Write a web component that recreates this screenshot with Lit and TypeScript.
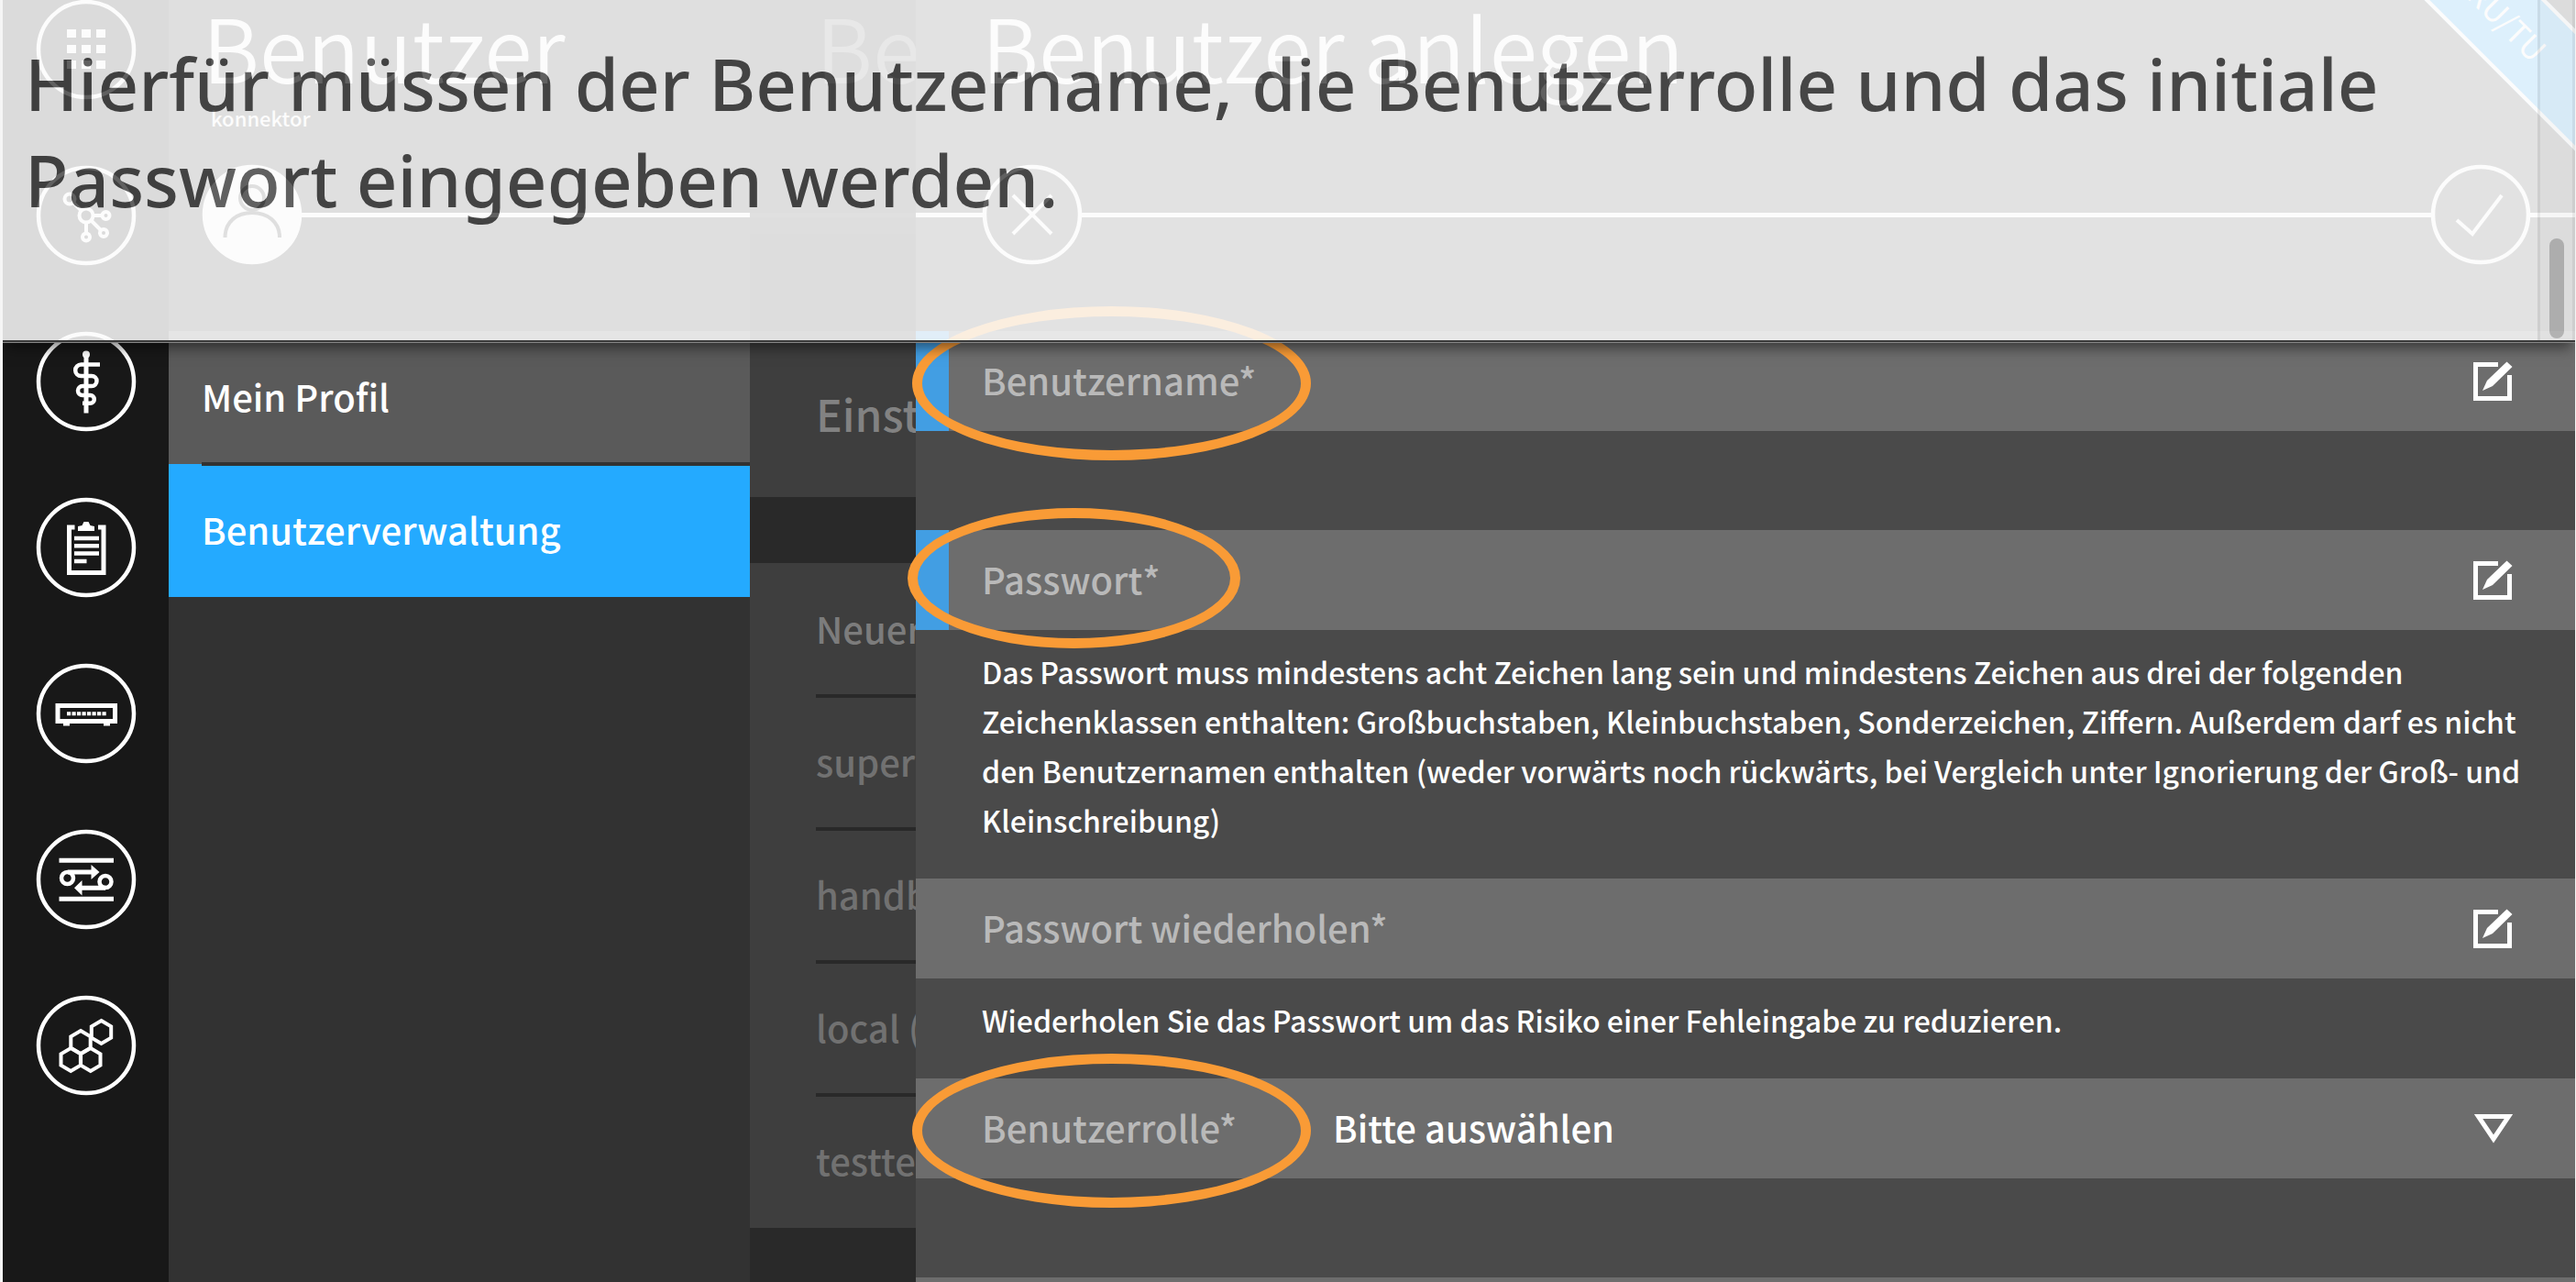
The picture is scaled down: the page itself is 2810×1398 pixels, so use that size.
import { LitElement, html, svg, css, nothing } from "lit";
import { customElement } from "lit/decorators.js";
import { classMap } from "lit/directives/class-map.js";

const hexagon = (cx: number, cy: number, r: number) =>
  [0, 1, 2, 3, 4, 5]
    .map((i) => {
      const a = (Math.PI / 3) * i - Math.PI / 2;
      return `${(cx + r * Math.cos(a)).toFixed(1)},${(cy + r * Math.sin(a)).toFixed(1)}`;
    })
    .join(" ");

const glyphs = {
  apps: svg`<g fill="#fff">${[38, 54, 70].map((x) =>
    [37, 54, 71].map((y) => svg`<rect x=${x - 5} y=${y - 5} width="10" height="9" />`)
  )}</g>`,
  network: svg`<g fill="none" stroke="#fff" stroke-width="4">
    <circle cx="54" cy="54" r="7.5" /><circle cx="75.5" cy="54" r="4" /><circle cx="73" cy="73" r="4" />
    <circle cx="54" cy="77.5" r="4" /><circle cx="36" cy="36" r="5.5" />
    <path d="M62 54H71M59.500 59.500L70 70M54 62V73M40 40L48.500 48.500" /></g>`,
  medical: svg`<g fill="none" stroke="#fff" stroke-width="4.5">
    <path d="M54 22V88.500" stroke-width="5" />
    <path d="M69 35.500H48.500a6.300 6.300 0 0 0 0 12.600H60a5.500 5.500 0 0 1 0 11H50a5 5 0 0 0 0 10H58.500a4.300 4.300 0 0 1 0 8.600H50" />
    <circle cx="54" cy="24.500" r="4" fill="#fff" stroke="none" /></g>`,
  report: svg`<g fill="none" stroke="#fff" stroke-width="5">
    <path d="M41.500 32H35.500V81.500H73V32H67" />
    <path d="M41 44H68M41 52.200H68M41 60.500H68M41 69H54.500" stroke-width="4.500" />
    <path d="M45 36V31L49.500 30L51.500 26H56.500L58.500 30L63 31V36Z" fill="#fff" stroke="none" /></g>`,
  device: svg`<g fill="none" stroke="#fff" stroke-width="5">
    <rect x="23" y="45.500" width="62.500" height="17" />
    <path d="M33 54.200H76" stroke-width="4" stroke-dasharray="4.200 1.300" />
    <path d="M29 66H36M73 66H80" stroke-width="3" /></g>`,
  transfer: svg`<g fill="none" stroke="#fff" stroke-width="5">
    <path d="M24.500 33.200H84M24.500 75.200H84M34 46H60M75 63.200H49" />
    <circle cx="33.500" cy="52.500" r="6.500" stroke-width="4.500" /><circle cx="75" cy="56.500" r="6.500" stroke-width="4.500" />
    <path d="M59.500 38L68.500 46L59.500 54ZM49.500 55L41 63.200L49.500 71.500Z" fill="#fff" stroke="none" /></g>`,
  modules: svg`<g fill="none" stroke="#fff" stroke-width="4">${[
    [70.5, 39.5],
    [48, 50.5],
    [37.2, 69.5],
    [58.8, 69.5],
  ].map(([x, y]) => svg`<polygon points=${hexagon(x, y, 12.4)} />`)}</g>`,
  close: svg`<path d="M33 33L75 75M75 33L33 75" fill="none" stroke="#fff" stroke-width="4" />`,
  check: svg`<path d="M28 60L45 75L77 33" fill="none" stroke="#fff" stroke-width="4" />`,
  user: svg`<g fill="none" stroke="#323232" stroke-width="4">
    <circle cx="54" cy="36" r="13" /><path d="M24.500 79C24.500 62 37 52 54 52S84 62 84 79" /></g>`,
};

type Glyph = keyof typeof glyphs;

const round = (name: Glyph, filled = false) => html`<svg class="round" viewBox="0 0 108 108" aria-hidden="true">
  <circle cx="54" cy="54" r="52" fill=${filled ? "#fff" : "none"} stroke="#fff" stroke-width="4.5" />
  ${glyphs[name]}
</svg>`;

const pencil = html`<svg class="pencil" viewBox="0 0 44 44" aria-hidden="true">
  <path d="M28 3.500H3.500V40.500H40.500V15" fill="none" stroke="#fff" stroke-width="5" />
  <path d="M11 32L16 21L37.500 0.500L43.500 6L22 27Z" fill="#fff" />
</svg>`;

const navItems: [Glyph, string][] = [
  ["apps", "Übersicht"],
  ["network", "Netzwerk"],
  ["medical", "Fachdienste"],
  ["report", "Protokolle"],
  ["device", "Kartenterminals"],
  ["transfer", "Verbindungen"],
  ["modules", "Module"],
];

const accounts = ["Neuer", "super", "handb", "local (", "testte"];

interface Field {
  id: string;
  label: string;
  type: string;
  required?: boolean;
  ring?: string;
  hint?: string;
}

const fields: Field[] = [
  { id: "name", label: "Benutzername*", type: "text", required: true, ring: "wide" },
  {
    id: "password",
    label: "Passwort*",
    type: "password",
    required: true,
    ring: "narrow",
    hint: "Das Passwort muss mindestens acht Zeichen lang sein und mindestens Zeichen aus drei der folgenden Zeichenklassen enthalten: Großbuchstaben, Kleinbuchstaben, Sonderzeichen, Ziffern. Außerdem darf es nicht den Benutzernamen enthalten (weder vorwärts noch rückwärts, bei Vergleich unter Ignorierung der Groß- und Kleinschreibung)",
  },
  {
    id: "repeat",
    label: "Passwort wiederholen*",
    type: "password",
    hint: "Wiederholen Sie das Passwort um das Risiko einer Fehleingabe zu reduzieren.",
  },
];

@customElement("app-root")
export class AppRoot extends LitElement {
  static styles = css`
    :host {
      display: block;
      background: #f5f5f5;
      color: #fff;
      font-family: "Noto Sans CJK SC", "Noto Sans", sans-serif;
      font-weight: 500;
      font-size: 40px;
    }
    * {
      box-sizing: border-box;
    }
    h1, h2, p, ul {
      margin: 0;
      padding: 0;
      list-style: none;
    }
    button, input, select {
      margin: 0;
      padding: 0;
      border: 0;
      background: none;
      color: inherit;
      font: inherit;
      appearance: none;
    }
    a {
      color: inherit;
      text-decoration: none;
    }
    svg {
      display: block;
      flex: none;
    }
    .frame {
      position: relative;
      display: grid;
      grid-template-columns: 181px 634px 181px minmax(0, 1fr);
      height: 100vh;
      margin: 0 1px 0 3px;
      overflow: hidden;
    }
    .rail {
      display: flex;
      flex-direction: column;
      align-items: center;
      gap: 73px;
      background: #181818;
    }
    .round {
      width: 108px;
      height: 108px;
      overflow: visible;
    }
    .column {
      min-width: 0;
      overflow: hidden;
      white-space: nowrap;
    }
    .menu {
      background: #323232;
    }
    .list {
      background: #292929;
      color: #717171;
    }
    .panel {
      background: #4a4a4a;
      white-space: normal;
      overflow: visible;
    }
    .head {
      padding: 2px 0 73px;
    }
    .title {
      padding-left: 37px;
      font-size: 95px;
      line-height: 96px;
      font-weight: 350;
    }
    .list .title,
    .panel .title {
      padding-left: 72px;
    }
    .sub {
      height: 60px;
      padding-left: 46px;
      font-size: 22px;
      line-height: 60px;
    }
    .bar {
      display: flex;
      align-items: center;
      height: 108px;
      margin-top: 22px;
    }
    .menu .bar {
      padding-left: 37px;
    }
    .line {
      flex: 1;
      height: 5px;
      background: #fff;
    }
    .line.start {
      flex: 0 0 73px;
    }
    .line.end {
      flex: 0 0 49px;
    }
    .list .line {
      background: #3a3a3a;
    }
    .list .title {
      color: #6f6f6f;
    }
    .entry {
      position: relative;
      display: flex;
      align-items: center;
      height: 145px;
      padding: 0 0 4px 36px;
      background: #5a5a5a;
    }
    .entry.active {
      background: #24aaff;
    }
    .entry + .entry::before {
      content: "";
      position: absolute;
      inset: -2px 0 auto 36px;
      height: 4px;
      background: #323232;
    }
    .section {
      display: flex;
      align-items: center;
      height: 181px;
      margin-bottom: 72px;
      padding: 0 0 4px 72px;
      background: #3e3e3e;
      color: #828282;
      font-size: 48px;
    }
    .list .entry {
      padding-left: 72px;
      background: #3e3e3e;
    }
    .list .entry:first-child {
      color: #7c7c7c;
    }
    .list .entry + .entry::before {
      left: 72px;
      background: #292929;
    }
    .field {
      position: relative;
      display: flex;
      align-items: center;
      height: 109px;
      padding: 0 68px 0 72px;
      background: #6d6d6d;
    }
    .field.required {
      box-shadow: inset 36px 0 #429ee3;
    }
    .field label {
      min-width: 383px;
      padding-bottom: 4px;
      color: #b9b9b9;
    }
    .field input,
    .field select {
      flex: 1;
      min-width: 0;
      padding-bottom: 4px;
      outline: 0;
    }
    .gap {
      height: 108px;
    }
    .hint {
      padding: 18px 54px 37px 72px;
      font-size: 32px;
      line-height: 54px;
    }
    .pencil {
      width: 44px;
      height: 44px;
    }
    .arrow {
      width: 42px;
      height: 32px;
    }
    .ring {
      position: absolute;
      z-index: 1;
      border: 11px solid #f99b36;
      border-radius: 50%;
      pointer-events: none;
    }
    .ring.wide {
      left: -4px;
      top: -27px;
      width: 435px;
      height: 168px;
    }
    .ring.narrow {
      left: -9px;
      top: -24px;
      width: 363px;
      height: 153px;
    }
    .ribbon {
      position: absolute;
      top: 2px;
      right: -151px;
      width: 400px;
      height: 94px;
      padding-right: 184px;
      border: solid #fff;
      border-width: 4px 0;
      background: #24aaff;
      font-size: 34px;
      line-height: 84px;
      font-weight: 400;
      text-align: right;
      transform: rotate(45deg);
    }
    .caption {
      position: absolute;
      z-index: 2;
      inset: 0 0 auto 0;
      border-bottom: 2px solid #3a3a3a;
      box-shadow: 0 1px #868686, 0 10px 14px -4px rgba(0, 0, 0, 0.5);
    }
    .sheet {
      display: flex;
      background: #fcfcfc;
      color: #464646;
      opacity: 0.86;
    }
    .message {
      flex: 1;
      padding: 39px 100px 122px 24px;
      font-family: "Noto Sans", sans-serif;
      font-size: 78px;
      line-height: 105px;
      font-weight: 500;
    }
    .track {
      display: flex;
      flex-direction: column;
      justify-content: flex-end;
      align-items: center;
      width: 41px;
      padding-bottom: 2px;
      border: solid #e4e4e4;
      border-width: 0 3px;
      background: #f5f5f5;
    }
    .thumb {
      width: 16px;
      height: 109px;
      border-radius: 8px;
      background: #bebebe;
    }
  `;

  private renderField(f: Field) {
    return html`
      <div class=${classMap({ field: true, required: !!f.required })}>
        <label for=${f.id}>${f.label}</label>
        <input id=${f.id} type=${f.type} />
        <button type="button" aria-label="Bearbeiten">${pencil}</button>
        ${f.ring ? html`<span class="ring ${f.ring}"></span>` : nothing}
      </div>
      ${f.hint ? html`<p class="hint">${f.hint}</p>` : html`<div class="gap"></div>`}
    `;
  }

  render() {
    return html`
      <div class="frame">
        <nav class="rail">
          ${navItems.map(([icon, name]) => html`<a href="#" aria-label=${name}>${round(icon)}</a>`)}
        </nav>

        <section class="column menu">
          <header class="head">
            <h1 class="title">Benutzer</h1>
            <p class="sub">konnektor</p>
            <div class="bar">${round("user", true)}<span class="line"></span></div>
          </header>
          <a class="entry" href="#">Mein Profil</a>
          <a class="entry active" href="#">Benutzerverwaltung</a>
        </section>

        <section class="column list">
          <header class="head">
            <h2 class="title">Be</h2>
            <div class="sub"></div>
            <div class="bar"><span class="line"></span></div>
          </header>
          <div class="section">Einst</div>
          <ul>
            ${accounts.map((a) => html`<li class="entry">${a}</li>`)}
          </ul>
        </section>

        <form class="column panel">
          <header class="head">
            <h2 class="title">Benutzer anlegen</h2>
            <div class="sub"></div>
            <div class="bar">
              <span class="line start"></span>
              <button type="button" aria-label="Abbrechen">${round("close")}</button>
              <span class="line"></span>
              <button type="button" aria-label="Speichern">${round("check")}</button>
              <span class="line end"></span>
            </div>
          </header>
          ${fields.map((f) => this.renderField(f))}
          <div class="field">
            <label for="role">Benutzerrolle*</label>
            <select id="role">
              <option>Bitte auswählen</option>
            </select>
            <svg class="arrow" viewBox="0 0 42 32" aria-hidden="true">
              <path d="M4.500 2.500H37.500L21 27Z" fill="none" stroke="#fff" stroke-width="5" />
            </svg>
            <span class="ring wide"></span>
          </div>
          <div class="gap"></div>
          <div class="field"></div>
        </form>

        <div class="ribbon">RU/TU</div>

        <aside class="caption">
          <div class="sheet">
            <p class="message">
              Hierfür müssen der Benutzername, die Benutzerrolle und das initiale Passwort eingegeben werden.
            </p>
            <div class="track"><span class="thumb"></span></div>
          </div>
        </aside>
      </div>
    `;
  }
}
